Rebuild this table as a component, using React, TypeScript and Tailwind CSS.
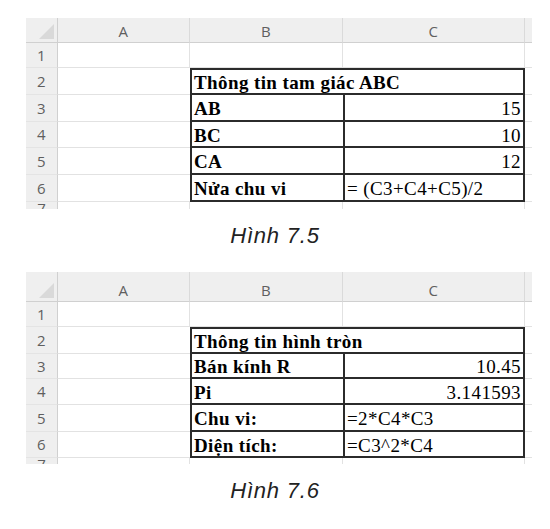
type Row = {
  label?: string;
  value?: string;
  align?: "left" | "right";
  title?: string;
};

type SheetProps = {
  rowsClass: string;
  rows: Row[];
};

function Corner() {
  return (
    <div className="flex items-end justify-end bg-[#efefef] border-r border-b border-[#d0d0d0] pr-[3px] pb-[3px]">
      <svg width="15" height="15" viewBox="0 0 15 15">
        <polygon points="15,0 15,15 0,15" fill="#d9d9d9" />
      </svg>
    </div>
  );
}

function ColHead({ name, last }: { name: string; last?: boolean }) {
  return (
    <div
      className={`flex items-end justify-center bg-[#efefef] border-b border-[#d0d0d0] ${
        last ? "" : "border-r border-r-[#dadada]"
      }`}
    >
      <span className="leading-[22px] text-[15px] text-[#5f5f5f] font-['Open_Sans',sans-serif]">
        {name}
      </span>
    </div>
  );
}

function RowHead({ n }: { n: number }) {
  return (
    <div className="flex items-center justify-center bg-[#efefef] border-r border-b border-[#d0d0d0] border-b-[#e4e4e4] overflow-hidden">
      <span className="text-[15px] text-[#5f5f5f] font-['Open_Sans',sans-serif]">{n}</span>
    </div>
  );
}

function Sheet({ rowsClass, rows }: SheetProps) {
  return (
    <div
      className={`grid grid-cols-[32px_132px_153px_182px_7px] ${rowsClass} w-[506px] ml-[26px] font-['Liberation_Serif','Times_New_Roman',serif] text-[19px] tracking-[0.4px] text-black`}
    >
      <Corner />
      <ColHead name="A" />
      <ColHead name="B" />
      <ColHead name="C" />
      <ColHead name="" last />

      {/* row 1 */}
      <RowHead n={1} />
      <div className="border-r border-b border-[#e2e2e2]" />
      <div className="border-r border-b border-[#e2e2e2]" />
      <div className="border-r border-b border-[#e2e2e2]" />
      <div className="border-b border-[#e2e2e2]" />

      {rows.map((r, i) => (
        <div key={i} className="contents">
          <RowHead n={i + 2} />
          <div className="border-b border-[#e2e2e2]" />
          {r.title ? (
            <div className="col-span-2 flex items-center pl-[2px] pt-[2px] border-2 border-[#2b2b2b] font-bold leading-none whitespace-nowrap">
              {r.title}
            </div>
          ) : (
            <>
              <div className="flex items-center pl-[2px] pt-[2px] border-l-2 border-b-2 border-[#2b2b2b] font-bold leading-none whitespace-nowrap">
                {r.label}
              </div>
              <div
                className={`flex items-center pt-[2px] border-x-2 border-b-2 border-[#2b2b2b] leading-none whitespace-nowrap ${
                  r.align === "right" ? "justify-end pr-[2px]" : "pl-[2px]"
                }`}
              >
                {r.value}
              </div>
            </>
          )}
          <div className="border-b border-[#e2e2e2]" />
        </div>
      ))}

      {/* partial row 7 */}
      <div className="bg-[#efefef] border-r border-[#d0d0d0] overflow-hidden flex justify-center">
        <span className="text-[15px] leading-[26px] tracking-normal text-[#5f5f5f] font-['Open_Sans',sans-serif] -mt-[7px]">
          7
        </span>
      </div>
      <div className="border-r border-[#e2e2e2]" />
      <div className="border-r border-[#e2e2e2]" />
      <div className="border-r border-[#e2e2e2]" />
      <div />
    </div>
  );
}

function Caption({ text }: { text: string }) {
  return (
    <p className="mt-[14px] text-center italic text-[22px] leading-[26px] tracking-[0.8px] text-[#222] font-['Liberation_Sans',Arial,sans-serif]">
      {text}
    </p>
  );
}

export default function App() {
  const tri: Row[] = [
    { title: "Thông tin tam giác ABC" },
    { label: "AB", value: "15", align: "right" },
    { label: "BC", value: "10", align: "right" },
    { label: "CA", value: "12", align: "right" },
    { label: "Nửa chu vi", value: "= (C3+C4+C5)/2", align: "left" },
  ];
  const circle: Row[] = [
    { title: "Thông tin hình tròn" },
    { label: "Bán kính R", value: "10.45", align: "right" },
    { label: "Pi", value: "3.141593", align: "right" },
    { label: "Chu vi:", value: "=2*C4*C3", align: "left" },
    { label: "Diện tích:", value: "=C3^2*C4", align: "left" },
  ];

  return (
    <div className="w-[550px] h-[529px] bg-white pt-[18px] overflow-hidden">
      <Sheet rowsClass="grid-rows-[25px_25px_27px_27px_26px_27px_27px_7px]" rows={tri} />
      <Caption text="Hình 7.5" />
      <div className="mt-[23px]">
        <Sheet rowsClass="grid-rows-[30px_25px_27px_25px_26px_27px_26px_6px]" rows={circle} />
      </div>
      <Caption text="Hình 7.6" />
    </div>
  );
}
